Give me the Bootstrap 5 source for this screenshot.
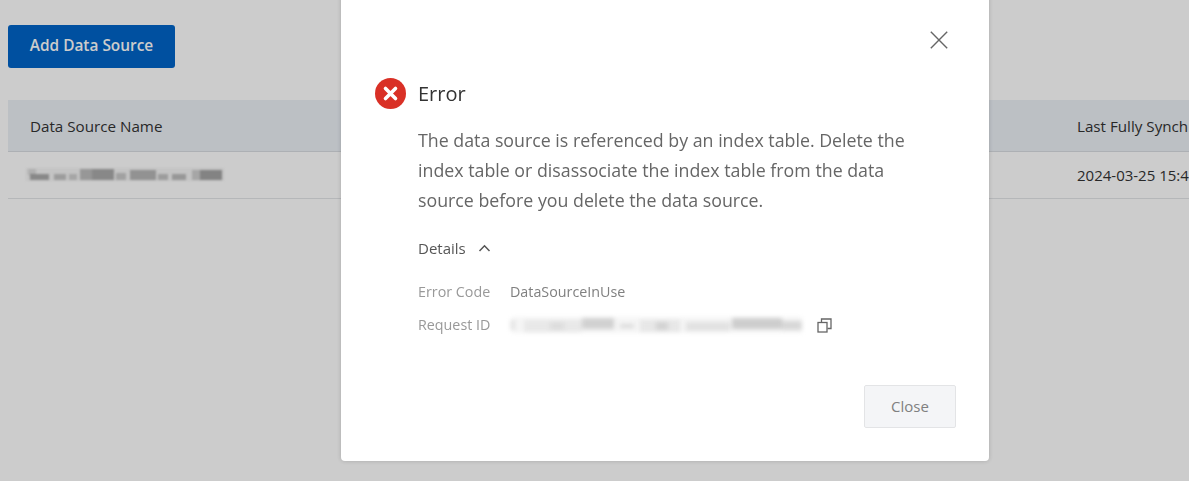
<!DOCTYPE html>
<html lang="en"><head><meta charset="utf-8"><title>Data Sources</title>
<link href="https://cdn.jsdelivr.net/npm/bootstrap@5.3.0/dist/css/bootstrap.min.css" rel="stylesheet">
<style>
html,body{height:100%;overflow:hidden}
body{background:#fff;font-family:"Open Sans","Noto Sans",sans-serif;color:#333;font-size:14px}
.page-wrap{padding:25px 0 0 8px;width:1300px}
.add-btn{background:#0064c8;border:0;color:#fff;font-weight:600;font-size:15.4px;width:167px;height:43px;border-radius:3px;padding:0 0 2px;margin-bottom:32px}
.src-table{width:1300px;table-layout:fixed;margin:0}
.src-table th{background:#ebf0f6;font-weight:400;height:51px;padding:2px 22px 0;color:#333;font-size:15.2px;border-bottom:1px solid #d9dde2;vertical-align:middle}
.src-table td{height:47px;padding:1px 22px 0;color:#333;font-size:15px;border-bottom:1px solid #e3e5e8;vertical-align:middle}
.src-table .col-a{width:1047px}
.mosaic{display:block;margin-left:-4px;margin-top:-3px;filter:blur(1.2px)}
.mosaic-light{filter:blur(2px)}
.scrim{position:fixed;inset:0;background:rgba(0,0,0,.2);overflow:hidden;padding:0 0 20px 341px}
.dlg{width:648px;background:#fff;border-radius:4px;box-shadow:0 0 5px rgba(0,0,0,.18);padding:0 33px 33px 34px}
.dlg-top{padding-top:60px}
.dlg-close{background:none;border:0;padding:0;line-height:0;margin-right:8px}
.err-head{gap:12px;margin-top:29px;margin-bottom:16px}
.err-title{font-size:20px;color:#333;line-height:30px;font-weight:400;margin:0}
.err-body{font-size:17.8px;line-height:30px;color:#666;margin:0 0 21px 43px;max-width:495px}
.det{margin-left:43px}
.det-toggle{font-size:15px;color:#555;line-height:24px;margin-bottom:22px}
.kv-row{margin-bottom:10px}
.kv-key{width:92px;color:#999;font-size:14.3px;line-height:20px}
.kv-val{color:#808080;font-size:14.3px;line-height:20px}
.copy-ico{margin-left:13px}
.dlg-foot{margin-top:47px}
.close-btn{width:92px;height:43px;background:#f4f5f7;border:1px solid #e3e4e6;border-radius:2px;color:#808080;font-size:15px;padding:0}
</style></head>
<body>
<div class="page-wrap">
  <button type="button" class="btn add-btn d-block">Add Data Source</button>
  <table class="table src-table">
    <thead><tr><th class="col-a">Data Source Name</th><th>Last Fully Synchronized</th></tr></thead>
    <tbody><tr>
      <td>
        <svg class="mosaic" width="198" height="20" viewBox="0 0 198 20"><g fill="#7a7a7a"><rect x="0" y="4" width="198" height="13" opacity=".08"/><rect x="2" y="5" width="8" height="6" opacity=".2"/><rect x="4" y="10" width="19" height="6" opacity=".6"/><rect x="28" y="10" width="12" height="6" opacity=".4"/><rect x="43" y="10" width="8" height="6" opacity=".3"/><rect x="54" y="5" width="12" height="11" opacity=".45"/><rect x="66" y="5" width="22" height="11" opacity=".6"/><rect x="90" y="9" width="10" height="7" opacity=".35"/><rect x="104" y="6" width="26" height="10" opacity=".5"/><rect x="132" y="10" width="10" height="6" opacity=".4"/><rect x="146" y="10" width="14" height="6" opacity=".45"/><rect x="166" y="6" width="8" height="10" opacity=".3"/><rect x="174" y="6" width="22" height="10" opacity=".65"/></g></svg>
      </td>
      <td>2024-03-25 15:45:12</td>
    </tr></tbody>
  </table>
</div>
<div class="scrim d-flex align-items-end">
  <div class="dlg">
    <div class="dlg-top d-flex justify-content-end">
      <button type="button" class="dlg-close" aria-label="Close"><svg width="18" height="18" viewBox="0 0 18 18" fill="none" stroke="#666" stroke-width="1.4"><path d="M.8.8 17.2 17.2M17.2.8.8 17.2"/></svg></button>
    </div>
    <div class="err-head d-flex align-items-center">
      <svg width="31" height="31" viewBox="0 0 31 31"><circle cx="15.5" cy="15.5" r="15.5" fill="#d93026"/><path d="M10.5 10.5 20.500 20.500M20.500 10.500 10.500 20.500" stroke="#fff" stroke-width="3.600" stroke-linecap="round"/></svg>
      <h5 class="err-title">Error</h5>
    </div>
    <p class="err-body">The data source is referenced by an index table. Delete the index table or disassociate the index table from the data source before you delete the data source.</p>
    <div class="det">
      <div class="det-toggle d-flex align-items-center gap-2">Details <svg class="ms-1" width="13" height="8" viewBox="0 0 13 8" fill="none" stroke="#555" stroke-width="1.500"><path d="M1.500 7 6.500 1.800 11.500 7"/></svg></div>
      <div class="kv-row d-flex"><div class="kv-key">Error Code</div><div class="kv-val">DataSourceInUse</div></div>
      <div class="d-flex align-items-center"><div class="kv-key">Request ID</div>
        <svg class="mosaic-light" width="294" height="26" viewBox="0 0 294 26"><g fill="#adadad"><rect x="2" y="5" width="290" height="16" opacity=".12"/><rect x="0" y="8" width="5" height="10" opacity=".25"/><rect x="14" y="8" width="58" height="12" opacity=".18"/><rect x="40" y="10" width="14" height="8" opacity=".2"/><rect x="72" y="6" width="32" height="11" opacity=".5"/><rect x="110" y="12" width="14" height="4" opacity=".35"/><rect x="130" y="8" width="40" height="12" opacity=".2"/><rect x="146" y="10" width="12" height="8" opacity=".35"/><rect x="176" y="10" width="44" height="9" opacity=".25"/><rect x="222" y="6" width="50" height="11" opacity=".55"/><rect x="272" y="9" width="20" height="9" opacity=".4"/></g></svg>
        <svg class="copy-ico" width="15" height="15" viewBox="0 0 15 15" fill="none" stroke="#666" stroke-width="1.300"><rect x="1" y="4.500" width="9" height="9.500"/><path d="M4.500 4V1H14V10.500H10.500"/></svg>
      </div>
    </div>
    <div class="dlg-foot d-flex justify-content-end">
      <button type="button" class="btn close-btn">Close</button>
    </div>
  </div>
</div>
<script src="https://cdn.jsdelivr.net/npm/bootstrap@5.3.0/dist/js/bootstrap.bundle.min.js"></script>
</body></html>
